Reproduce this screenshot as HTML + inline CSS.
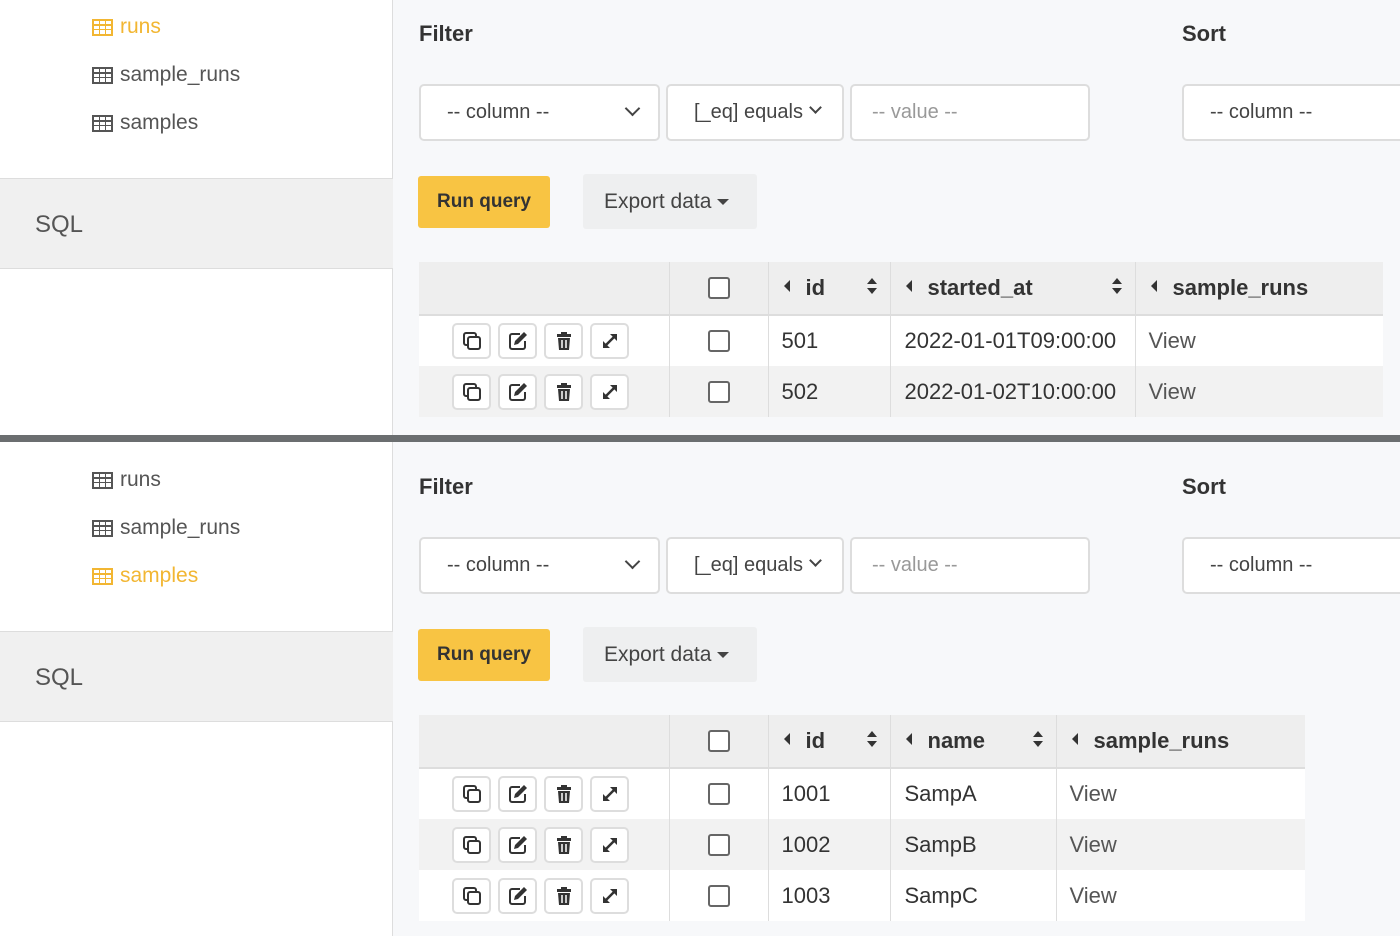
<!DOCTYPE html>
<html><head><meta charset="utf-8"><style>
*{box-sizing:border-box;margin:0;padding:0}
body{width:1400px;height:936px;overflow:hidden;background:#f7f8fa;font-family:"Liberation Sans",sans-serif;color:#333;position:relative}
.p{position:absolute;left:0;width:1400px;height:436px;overflow:hidden;background:#f7f8fa}
.a{position:absolute}
.side{left:0;top:0;width:393px;height:100%;background:#fff;border-right:1px solid #ddd}
.it{left:92px;font-size:21px;color:#555;line-height:24px;display:flex;align-items:center}
.it.on{color:#f2b632}
.ic{width:21px;height:17px;border:2px solid currentColor;margin-right:7px;background:
linear-gradient(currentColor,currentColor) 0 3px/100% 2px no-repeat,
linear-gradient(currentColor,currentColor) 0 8px/100% 1px no-repeat,
linear-gradient(currentColor,currentColor) 5px 0/1px 100% no-repeat,
linear-gradient(currentColor,currentColor) 11px 0/1px 100% no-repeat}
.sql{left:0;top:178px;width:393px;height:91px;background:#f0f0f0;border-top:1px solid #ddd;border-bottom:1px solid #ddd;font-size:24px;color:#555;padding:32px 0 0 35px}
.h{font-size:22px;font-weight:bold;color:#333}
.sel{height:57px;background:#fff;border:2px solid #ddd;border-radius:5px;font-size:20px;color:#444;padding:15px 0 0 26px}
.sel.ph{color:#999;padding-left:20px}
.chev{position:absolute;right:20px;top:17px;width:11px;height:11px;border-right:2px solid #444;border-bottom:2px solid #444;transform:rotate(45deg)}
.run{left:418px;top:176px;width:132px;height:52px;background:#f8c443;border-radius:3px;font-weight:bold;font-size:19px;color:#333;text-align:center;line-height:52px}
.exp{left:583px;top:174px;width:174px;height:55px;background:#eeeff0;border-radius:3px;font-size:21px;color:#444;line-height:55px;padding-left:21px}
.caret{display:inline-block;border-left:6px solid transparent;border-right:6px solid transparent;border-top:6px solid #444;vertical-align:middle;margin-left:6px}
table{position:absolute;left:419px;top:262px;border-collapse:collapse;font-size:22px}
td,th{border-left:1px solid #ddd;padding:0;vertical-align:middle}
th{height:53px;background:#eee;text-align:left;font-weight:bold;color:#333;border-bottom:2px solid #ddd}
td{height:51px;color:#333}
tr.w td{background:#fff}
tr.g td{background:#f2f2f2}
tr td:first-child,tr th:first-child{border-left:none}
.cb{display:block;margin:0 auto;width:22px;height:22px;border:2px solid #666;border-radius:3px;background:#fff}
.btns{display:flex;gap:7px;padding-left:33px}
.b{width:39px;height:36px;border:2px solid #ddd;border-radius:5px;background:#fff;display:flex;align-items:center;justify-content:center}
.b svg{width:22px;height:22px}
.lt{display:inline-block;border-top:6px solid transparent;border-bottom:6px solid transparent;border-right:6px solid #333;margin:0 16px 0 15px;vertical-align:3px}
.sort{float:right;margin-right:12px;width:12px;height:18px;margin-top:2px}
.v{color:#555}
</style></head><body>
<svg width="0" height="0" style="position:absolute">
<defs>
<g id="cp"><rect x="3" y="3" width="12" height="12" rx="2" fill="none" stroke="#333" stroke-width="2"/><rect x="7" y="7" width="12" height="12" rx="2" fill="#fff" stroke="#333" stroke-width="2"/></g>
<g id="ed"><path d="M13 4H5a2 2 0 0 0-2 2v11a2 2 0 0 0 2 2h11a2 2 0 0 0 2-2v-6" fill="none" stroke="#333" stroke-width="2"/><path d="M17 2l3 3-9 9-4 1 1-4z" fill="#333"/></g>
<g id="tr"><rect x="4" y="4" width="14" height="3" fill="#333"/><rect x="8" y="2" width="6" height="3" fill="#333"/><path d="M5 8h12l-1 12H6z" fill="#333"/><path d="M9 10v8M13 10v8" stroke="#fff" stroke-width="1.5"/></g>
<g id="ex"><path d="M6 16L16 6" stroke="#333" stroke-width="2.5"/><path d="M11 4h7v7z M4 11v7h7z" fill="#333"/></g>
<g id="so"><path d="M1 7L6 1 11 7z M1 11L6 17 11 11z" fill="#333"/></g>
</defs></svg>

<!-- PANEL 1 -->
<div class="p" style="top:0">
<div class="a side"></div>
<div class="a it on" style="top:15px"><span class="ic"></span>runs</div>
<div class="a it" style="top:63px"><span class="ic"></span>sample_runs</div>
<div class="a it" style="top:111px"><span class="ic"></span>samples</div>
<div class="a sql">SQL</div>
<div class="a h" style="left:419px;top:21px">Filter</div>
<div class="a h" style="left:1182px;top:21px">Sort</div>
<div class="a sel" style="left:419px;top:84px;width:241px">-- column --<span class="chev"></span></div>
<div class="a sel" style="left:666px;top:84px;width:178px">[_eq] equals<span class="chev" style="right:22px;width:9px;height:9px"></span></div>
<div class="a sel ph" style="left:850px;top:84px;width:240px">-- value --</div>
<div class="a sel" style="left:1182px;top:84px;width:240px">-- column --</div>
<div class="a run">Run query</div>
<div class="a exp">Export data<span class="caret"></span></div>
<table>
<tr><th style="width:250px"></th><th style="width:99px"><span class="cb"></span></th><th style="width:122px"><span class="lt"></span>id<svg class="sort" viewBox="0 0 12 18"><use href="#so"/></svg></th><th style="width:245px"><span class="lt"></span>started_at<svg class="sort" viewBox="0 0 12 18"><use href="#so"/></svg></th><th style="width:248px"><span class="lt"></span>sample_runs</th></tr>
<tr class="w"><td><div class="btns"><span class="b"><svg viewBox="0 0 22 22"><use href="#cp"/></svg></span><span class="b"><svg viewBox="0 0 22 22"><use href="#ed"/></svg></span><span class="b"><svg viewBox="0 0 22 22"><use href="#tr"/></svg></span><span class="b"><svg viewBox="0 0 22 22"><use href="#ex"/></svg></span></div></td><td><span class="cb"></span></td><td style="padding-left:13px">501</td><td style="padding-left:14px">2022-01-01T09:00:00</td><td class="v" style="padding-left:13px">View</td></tr>
<tr class="g"><td><div class="btns"><span class="b"><svg viewBox="0 0 22 22"><use href="#cp"/></svg></span><span class="b"><svg viewBox="0 0 22 22"><use href="#ed"/></svg></span><span class="b"><svg viewBox="0 0 22 22"><use href="#tr"/></svg></span><span class="b"><svg viewBox="0 0 22 22"><use href="#ex"/></svg></span></div></td><td><span class="cb"></span></td><td style="padding-left:13px">502</td><td style="padding-left:14px">2022-01-02T10:00:00</td><td class="v" style="padding-left:13px">View</td></tr>
</table>
</div>

<div class="a" style="left:0;top:435px;width:1400px;height:7px;background:#6b6e70"></div>

<!-- PANEL 2 -->
<div class="p" style="top:442px;height:494px">
<div style="position:absolute;left:0;top:11px;width:1400px;height:494px">
<div class="a side" style="top:-11px"></div>
<div class="a it" style="top:15px"><span class="ic"></span>runs</div>
<div class="a it" style="top:63px"><span class="ic"></span>sample_runs</div>
<div class="a it on" style="top:111px"><span class="ic"></span>samples</div>
<div class="a sql">SQL</div>
<div class="a h" style="left:419px;top:21px">Filter</div>
<div class="a h" style="left:1182px;top:21px">Sort</div>
<div class="a sel" style="left:419px;top:84px;width:241px">-- column --<span class="chev"></span></div>
<div class="a sel" style="left:666px;top:84px;width:178px">[_eq] equals<span class="chev" style="right:22px;width:9px;height:9px"></span></div>
<div class="a sel ph" style="left:850px;top:84px;width:240px">-- value --</div>
<div class="a sel" style="left:1182px;top:84px;width:240px">-- column --</div>
<div class="a run">Run query</div>
<div class="a exp">Export data<span class="caret"></span></div>
<table>
<tr><th style="width:250px"></th><th style="width:99px"><span class="cb"></span></th><th style="width:122px"><span class="lt"></span>id<svg class="sort" viewBox="0 0 12 18"><use href="#so"/></svg></th><th style="width:166px"><span class="lt"></span>name<svg class="sort" viewBox="0 0 12 18"><use href="#so"/></svg></th><th style="width:249px"><span class="lt"></span>sample_runs</th></tr>
<tr class="w"><td><div class="btns"><span class="b"><svg viewBox="0 0 22 22"><use href="#cp"/></svg></span><span class="b"><svg viewBox="0 0 22 22"><use href="#ed"/></svg></span><span class="b"><svg viewBox="0 0 22 22"><use href="#tr"/></svg></span><span class="b"><svg viewBox="0 0 22 22"><use href="#ex"/></svg></span></div></td><td><span class="cb"></span></td><td style="padding-left:13px">1001</td><td style="padding-left:14px">SampA</td><td class="v" style="padding-left:13px">View</td></tr>
<tr class="g"><td><div class="btns"><span class="b"><svg viewBox="0 0 22 22"><use href="#cp"/></svg></span><span class="b"><svg viewBox="0 0 22 22"><use href="#ed"/></svg></span><span class="b"><svg viewBox="0 0 22 22"><use href="#tr"/></svg></span><span class="b"><svg viewBox="0 0 22 22"><use href="#ex"/></svg></span></div></td><td><span class="cb"></span></td><td style="padding-left:13px">1002</td><td style="padding-left:14px">SampB</td><td class="v" style="padding-left:13px">View</td></tr>
<tr class="w"><td><div class="btns"><span class="b"><svg viewBox="0 0 22 22"><use href="#cp"/></svg></span><span class="b"><svg viewBox="0 0 22 22"><use href="#ed"/></svg></span><span class="b"><svg viewBox="0 0 22 22"><use href="#tr"/></svg></span><span class="b"><svg viewBox="0 0 22 22"><use href="#ex"/></svg></span></div></td><td><span class="cb"></span></td><td style="padding-left:13px">1003</td><td style="padding-left:14px">SampC</td><td class="v" style="padding-left:13px">View</td></tr>
</table>
</div>
</div>
</body></html>
